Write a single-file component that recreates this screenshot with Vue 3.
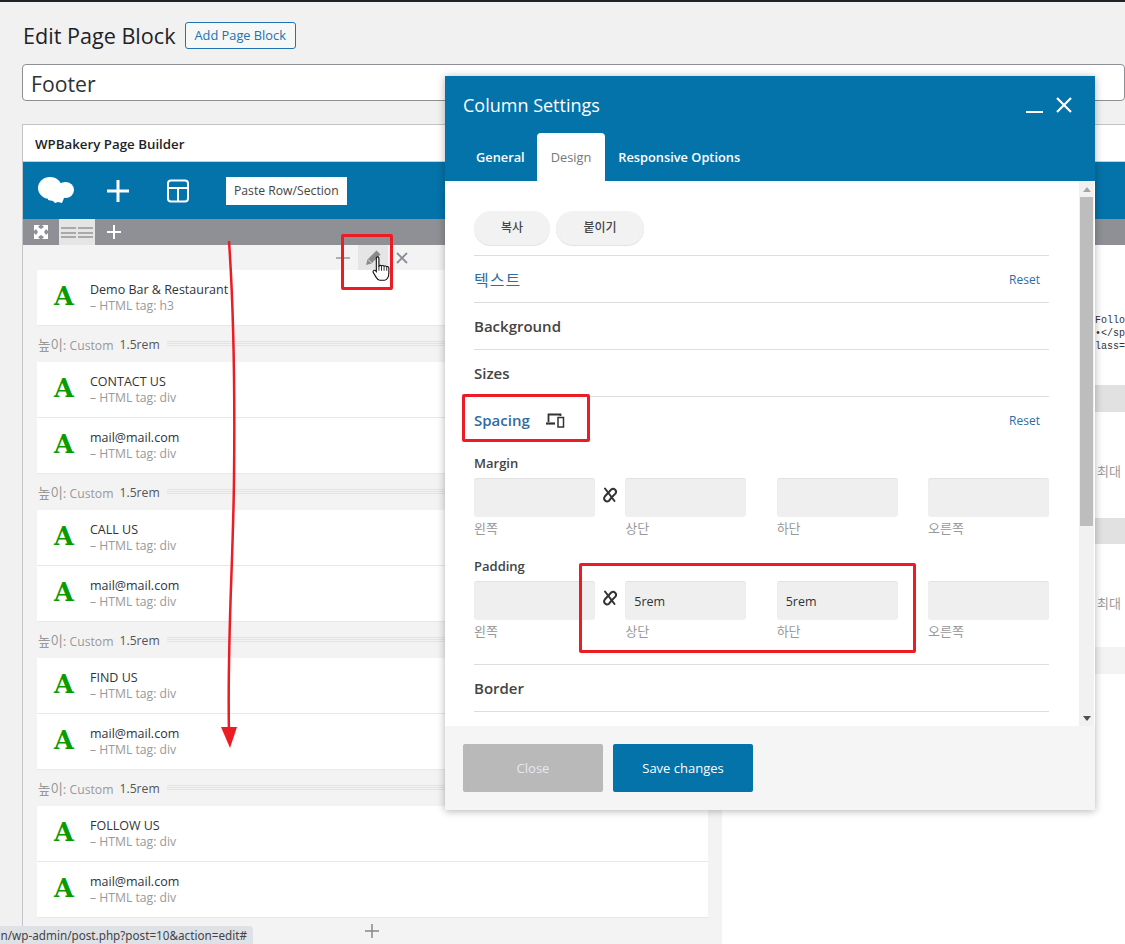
<script setup>
const rows = [
  { title: 'Demo Bar & Restaurant', tag: 'h3', sep: true },
  { title: 'CONTACT US', tag: 'div' },
  { title: 'mail@mail.com', tag: 'div', sep: true },
  { title: 'CALL US', tag: 'div' },
  { title: 'mail@mail.com', tag: 'div', sep: true },
  { title: 'FIND US', tag: 'div' },
  { title: 'mail@mail.com', tag: 'div', sep: true },
  { title: 'FOLLOW US', tag: 'div' },
  { title: 'mail@mail.com', tag: 'div' },
]

const sides = [
  { label: '왼쪽' },
  { label: '상단', padding: '5rem' },
  { label: '하단', padding: '5rem' },
  { label: '오른쪽' },
]
</script>

<template>
  <div class="page">
    <div class="heading">
      <h1 class="page-title">Edit Page Block</h1>
      <a class="add-btn">Add Page Block</a>
    </div>
    <div class="title-input">Footer</div>

    <div class="builder">
      <div class="builder-head">WPBakery Page Builder</div>
      <div class="toolbar">
        <svg class="logo" width="36" height="27" viewBox="0 0 36 27">
          <ellipse cx="12" cy="11" rx="12" ry="11" fill="#fff" />
          <ellipse cx="27.500" cy="13" rx="8.500" ry="8" fill="#fff" />
          <path d="M10 18h16v3l-2 5-4-1-3 1-2-2-5-1z" fill="#fff" />
        </svg>
        <svg class="tool-plus" width="24" height="24" viewBox="0 0 24 24">
          <path d="M12 1v22M1 12h22" stroke="#fff" stroke-width="3" />
        </svg>
        <svg class="tool-layout" width="24" height="24" viewBox="0 0 24 24" fill="none" stroke="#fff" stroke-width="2">
          <rect x="2" y="1.500" width="20" height="21" rx="3" />
          <path d="M2 9h20M12 9v13" />
        </svg>
        <span class="paste">Paste Row/Section</span>
      </div>
      <div class="subbar">
        <svg class="full" width="14" height="14" viewBox="0 0 14 14">
          <path d="M0 0h6L4 2l3 2 3-2-2-2h6v6l-2-2-2 3 2 3 2-2v6H8l2-2-3-2-3 2 2 2H0V8l2 2 2-3-2-3-2 2z" fill="#fff" />
          <path d="M7 5.500 8.500 7 7 8.500 5.500 7z" fill="#fff" />
        </svg>
        <span class="view-tab">
          <i></i><i></i>
        </span>
        <svg class="sub-plus" width="16" height="16" viewBox="0 0 16 16">
          <path d="M8 1v14M1 8h14" stroke="#fff" stroke-width="2" />
        </svg>
      </div>

      <div class="columns">
        <div class="col-left">
          <div class="col-controls">
            <svg width="16" height="16" viewBox="0 0 16 16">
              <path d="M1 8h14" stroke="#999" stroke-width="1.500" />
              <path d="M8 4v8" stroke="#999" stroke-width="1.500" opacity=".35" />
            </svg>
            <span class="pencil-box">
              <svg width="17" height="17" viewBox="0 0 17 17">
                <path d="M1 16 2.500 10.500 11.500 1.500l4 4L6.500 14.500z" fill="#8a8a8a" />
                <path d="M3 10.500 6.500 14" stroke="#e5e5e5" stroke-width="1" />
              </svg>
            </span>
            <svg width="14" height="14" viewBox="0 0 14 14">
              <path d="M2 2l10 10M12 2 2 12" stroke="#8a8f94" stroke-width="1.800" />
            </svg>
          </div>
          <div class="rows">
            <template v-for="(row, i) in rows" :key="i">
              <div class="el">
                <span class="el-icon">A</span>
                <div>
                  <div class="el-title">{{ row.title }}</div>
                  <div class="el-tag">– HTML tag: {{ row.tag }}</div>
                </div>
              </div>
              <div v-if="row.sep" class="sep">
                <span class="sep-label"><span class="sep-ko">높이:</span> Custom</span>
                <span class="sep-value">1.5rem</span>
                <span class="sep-line"></span>
              </div>
            </template>
          </div>
          <svg class="add-el" width="16" height="16" viewBox="0 0 16 16">
            <path d="M8 1v14M1 8h14" stroke="#888" stroke-width="1.500" />
          </svg>
        </div>

        <div class="col-right">
          <pre class="code">Follo
•&lt;/sp
lass=</pre>
          <div class="band first"></div>
          <div class="limit">최대</div>
          <div class="band second"></div>
          <div class="limit short">최대</div>
          <div class="band third"></div>
        </div>
      </div>
    </div>

    <div class="status"><span>n/wp-admin/post.php?post=10&amp;action=edit#</span></div>

    <!-- settings dialog -->
    <div class="modal">
      <div class="modal-head">
        <div class="modal-title">
          <span>Column Settings</span>
          <div class="modal-actions">
            <span class="minimize"></span>
            <svg width="16" height="16" viewBox="0 0 16 16">
              <path d="M1 1l14 14M15 1 1 15" stroke="#fff" stroke-width="2.200" />
            </svg>
          </div>
        </div>
        <div class="tabs">
          <span class="tab">General</span>
          <span class="tab active">Design</span>
          <span class="tab">Responsive Options</span>
        </div>
      </div>

      <div class="modal-body">
        <div class="scrollbar">
          <span class="arrow up"></span>
          <span class="thumb"></span>
          <span class="arrow down"></span>
        </div>
        <div class="form">
          <div class="copy-row">
            <span class="pill copy">복사</span>
            <span class="pill paste-pill">붙이기</span>
          </div>
          <div class="section open">
            <span class="ko-head">텍스트</span>
            <a class="reset">Reset</a>
          </div>
          <div class="section">Background</div>
          <div class="section">Sizes</div>
          <div class="section open no-line">
            <span>Spacing</span>
            <svg class="devices" width="20" height="16" viewBox="0 0 20 16" fill="none" stroke="#333">
              <path d="M3.500 10V2.500h12V4" stroke-width="1.800" />
              <path d="M1 11.500h9" stroke-width="2.200" />
              <rect x="13" y="5.500" width="5.500" height="9.500" stroke-width="1.500" />
            </svg>
            <a class="reset">Reset</a>
          </div>

          <div class="box-group margin-group">
            <div class="box-label">Margin</div>
            <div class="box-fields">
              <div v-for="side in sides" :key="side.label" class="field">
                <div class="field-input"></div>
                <div class="field-label">{{ side.label }}</div>
              </div>
              <svg class="unlink" width="16" height="16" viewBox="0 0 16 16" fill="none" stroke="#333" stroke-width="2" stroke-linecap="round">
                <path d="M3 1.500 12.500 14" />
                <path d="M6 6 2.800 9.500a3 3 0 0 0 4.200 4.200L10 10" />
                <path d="M6 6 9.200 2.500a3 3 0 0 1 4.200 4.200L10 10" />
              </svg>
            </div>
          </div>
          <div class="box-group">
            <div class="box-label">Padding</div>
            <div class="box-fields">
              <div v-for="side in sides" :key="side.label" class="field">
                <div class="field-input">{{ side.padding }}</div>
                <div class="field-label">{{ side.label }}</div>
              </div>
              <svg class="unlink" width="16" height="16" viewBox="0 0 16 16" fill="none" stroke="#333" stroke-width="2" stroke-linecap="round">
                <path d="M3 1.500 12.500 14" />
                <path d="M6 6 2.800 9.500a3 3 0 0 0 4.200 4.200L10 10" />
                <path d="M6 6 9.200 2.500a3 3 0 0 1 4.200 4.200L10 10" />
              </svg>
            </div>
          </div>
          <div class="section after-boxes">Border</div>
          <div class="section"></div>
        </div>
      </div>

      <div class="modal-foot">
        <span class="foot-btn close">Close</span>
        <span class="foot-btn save">Save changes</span>
      </div>
    </div>

    <!-- red markup on top of the screenshot -->
    <span class="mark mark-pencil"></span>
    <span class="mark mark-spacing"></span>
    <span class="mark mark-padding"></span>
    <svg class="arrow-line" width="30" height="520" viewBox="0 0 30 520" fill="none">
      <path d="M10 2C14 60 16 150 15 240S8 400 10 495" stroke="#ed1c24" stroke-width="2.500" />
      <path d="M2 488h16l-7 21z" fill="#ed1c24" />
    </svg>
    <svg class="hand" width="19" height="26" viewBox="0 0 22 30">
      <path d="M5 2.500c0-2 3-2 3 0v9c1-.8 2.300-.8 3 0 1-.8 2.300-.6 3 .3 1-.6 2.500-.3 3 .7 1-.5 2.500 0 2.500 1.500v6c0 4-2 8-5 8H9c-2 0-3-1.500-4-3L1.500 19c-1-1.500 1-3.500 2.500-2l1 1z" fill="#fff" stroke="#111" stroke-width="1.300" />
      <path d="M8 11.500V17M11 11.800V17M14 12.300V17M17 13v4" stroke="#111" stroke-width="1" />
    </svg>
  </div>
</template>

<style>
html,
body {
  margin: 0;
  overflow: hidden;
}
</style>

<style scoped>
.page {
  position: relative;
  width: 1125px;
  height: 944px;
  overflow: hidden;
  box-sizing: border-box;
  border-top: 2px solid #1d2327;
  background: #f1f1f1;
  padding-top: 20px;
  font-family: "Open Sans", "Noto Sans CJK KR", sans-serif;
  color: #444;
}

.heading {
  display: flex;
  align-items: center;
  gap: 9px;
  margin-left: 23px;
  height: 27px;
}

.page-title {
  margin: 0;
  font-size: 21.600px;
  font-weight: 400;
  color: #1d2327;
  white-space: nowrap;
}

.add-btn {
  box-sizing: border-box;
  height: 27px;
  line-height: 25px;
  padding: 0 9px;
  border: 1px solid #2271b1;
  border-radius: 3px;
  background: #f6f7f7;
  color: #2271b1;
  font-size: 12.800px;
  font-weight: 500;
}

.title-input {
  box-sizing: border-box;
  height: 37px;
  margin: 15px 0 0 22px;
  padding-left: 8px;
  border: 1px solid #8c8f94;
  border-radius: 4px;
  background: #fff;
  font-size: 21.200px;
  line-height: 37px;
  color: #2c3338;
}

.builder {
  margin: 23px 0 0 22px;
  border: 1px solid #c3c4c7;
  border-right: 0;
  background: #fff;
}

.builder-head {
  height: 37px;
  padding-left: 12px;
  line-height: 38px;
  font-size: 13.300px;
  font-weight: 600;
  color: #1d2327;
  border-bottom: 1px solid #ccd0d4;
  box-sizing: border-box;
}

.toolbar {
  display: flex;
  align-items: center;
  height: 57px;
  background: #0473aa;
}

.logo {
  margin-left: 15px;
}

.tool-plus {
  margin-left: 32px;
}

.tool-layout {
  margin-left: 36px;
}

.paste {
  margin-left: 36px;
  padding: 0 8px;
  width: 105px;
  height: 28px;
  line-height: 28px;
  background: #fff;
  font-size: 12.200px;
  white-space: nowrap;
  color: #444;
}

.subbar {
  display: flex;
  align-items: center;
  height: 26px;
  background: #8e9095;
}

.full {
  margin-left: 11px;
}

.view-tab {
  display: flex;
  justify-content: center;
  gap: 2px;
  width: 36px;
  height: 26px;
  margin-left: 11px;
  align-items: center;
  background: #e5e5e5;
}

.view-tab i {
  width: 15px;
  height: 11px;
  background: repeating-linear-gradient(#a9a9a9 0 2px, transparent 2px 4.500px);
}

.sub-plus {
  margin-left: 11px;
}

.columns {
  display: flex;
  height: 700px;
}

.col-left {
  flex: 0 0 699px;
  box-sizing: border-box;
  padding: 0 14px 0 14px;
  background: #f3f3f3;
}

.col-right {
  flex: 1;
  padding: 69px 0 0 373px;
  background: #fff;
}

.col-controls {
  display: flex;
  justify-content: flex-end;
  align-items: center;
  height: 25px;
  gap: 7px;
  padding-right: 299px;
}

.pencil-box {
  display: flex;
  align-items: center;
  justify-content: center;
  width: 30px;
  height: 25px;
  background: #e5e5e5;
}

.el {
  display: flex;
  align-items: center;
  box-sizing: border-box;
  height: 56px;
  background: #fff;
  border-bottom: 1px solid #e8e8e8;
}

.el-icon {
  width: 53px;
  padding: 0 0 2px 17px;
  box-sizing: border-box;
  font-family: "DejaVu Serif", serif;
  font-size: 25.500px;
  font-weight: 700;
  line-height: 1;
  color: #0a9b00;
}

.el-title {
  font-size: 12.500px;
  line-height: 16px;
  font-weight: 500;
  color: #333;
}

.el-tag {
  font-size: 12.200px;
  line-height: 16px;
  color: #999;
}

.sep {
  display: flex;
  align-items: center;
  height: 36px;
  padding-left: 1px;
  font-size: 12.200px;
}

.sep-label {
  color: #999;
}

.sep-ko {
  font-size: 13.500px;
}

.sep-value {
  margin-left: 6px;
  color: #555;
}

.sep-line {
  flex: 1;
  height: 6px;
  margin-left: 7px;
  background: repeating-linear-gradient(#e3e3e3 0 1px, transparent 1px 2px);
}

.add-el {
  display: block;
  margin: 5px 0 0 327px;
}

.code {
  margin: 0;
  font-family: "Liberation Mono", monospace;
  font-size: 10px;
  line-height: 13px;
  color: #333;
}

.band {
  height: 27px;
  background: #e1e1e1;
}

.band.first {
  margin-top: 32px;
}

.band.second {
  height: 26px;
}

.band.third {
  background: #f3f3f3;
}

.limit {
  height: 106px;
  padding-left: 2px;
  line-height: 118px;
  font-size: 13px;
  color: #999;
}

.limit.short {
  height: 103px;
}

.status {
  position: absolute;
  left: 0;
  bottom: 0;
  display: flex;
  justify-content: flex-end;
  box-sizing: border-box;
  width: 253px;
  height: 18px;
  overflow: hidden;
  padding-right: 6px;
  white-space: nowrap;
  border-top-right-radius: 4px;
  background: #dee1e6;
  font-family: "Noto Sans", sans-serif;
  font-size: 11.700px;
  line-height: 18px;
  color: #444;
}

.status span {
  flex: none;
}

.modal {
  position: absolute;
  left: 445px;
  top: 74px;
  display: flex;
  flex-direction: column;
  width: 650px;
  height: 734px;
  background: #fff;
  box-shadow: 0 1px 8px rgba(0, 0, 0, 0.3);
}

.modal-head {
  height: 105px;
  background: #0473aa;
  color: #fff;
}

.modal-title {
  display: flex;
  align-items: center;
  justify-content: space-between;
  height: 57px;
  padding: 0 23px 0 18px;
  font-size: 18px;
}

.modal-actions {
  display: flex;
  align-items: center;
  gap: 13px;
}

.minimize {
  width: 17px;
  height: 2px;
  margin-top: 14px;
  background: #fff;
}

.tabs {
  display: flex;
  height: 48px;
  padding-left: 18px;
}

.tab {
  padding: 0 12px 0 13px;
  line-height: 48px;
  font-size: 12.800px;
  font-weight: 600;
  white-space: nowrap;
}

.tab.active {
  padding: 0 14px;
  border-radius: 4px 4px 0 0;
  background: #fff;
  color: #777;
  font-weight: 400;
}

.modal-body {
  position: relative;
  flex: 1;
  overflow: hidden;
}

.scrollbar {
  position: absolute;
  top: 0;
  right: 1px;
  bottom: 0;
  display: flex;
  flex-direction: column;
  align-items: center;
  width: 15px;
  background: #f1f1f1;
}

.thumb {
  width: 13px;
  height: 329px;
  background: #bdbdbd;
}

.arrow {
  width: 0;
  height: 0;
  border-left: 4px solid transparent;
  border-right: 4px solid transparent;
}

.arrow.up {
  margin: 6px 0 5px;
  border-bottom: 5px solid #a6a6a6;
}

.arrow.down {
  margin-top: auto;
  margin-bottom: 5px;
  border-top: 5px solid #505050;
}

.form {
  box-sizing: border-box;
  width: 575px;
  margin-left: 29px;
  padding-top: 30px;
}

.copy-row {
  display: flex;
  gap: 6px;
  height: 44px;
}

.pill {
  box-sizing: border-box;
  height: 34px;
  border-radius: 17px;
  background: #f2f2f2;
  box-shadow: 0 1px 1px rgba(0, 0, 0, 0.12);
  text-align: center;
  font-size: 12px;
  font-weight: 500;
  line-height: 34px;
  color: #444;
}

.copy {
  width: 76px;
}

.paste-pill {
  width: 88px;
}

.section {
  display: flex;
  align-items: center;
  box-sizing: border-box;
  height: 47px;
  border-top: 1px solid #ddd;
  font-size: 15px;
  font-weight: 600;
  color: #444;
}

.section.open {
  color: #2e6da4;
}

.ko-head {
  font-size: 16px;
  font-weight: 400;
  letter-spacing: 1px;
}

.devices {
  margin-left: 15px;
}

.reset {
  margin-left: auto;
  margin-right: 9px;
  font-size: 12px;
  font-weight: 400;
  color: #2e6da4;
}

.box-group {
  height: 103px;
}

.margin-group {
  margin-top: 13px;
}

.box-label {
  height: 22px;
  line-height: 14px;
  font-size: 13px;
  font-weight: 600;
  color: #444;
}

.box-fields {
  position: relative;
  display: flex;
  justify-content: space-between;
}

.field {
  width: 121px;
}

.field-input {
  box-sizing: border-box;
  height: 39px;
  padding-left: 9px;
  border-radius: 3px;
  background: #efefef;
  box-shadow: inset 0 1px 1px rgba(0, 0, 0, 0.06);
  font-size: 12.500px;
  line-height: 41px;
  color: #333;
}

.field-label {
  margin-top: 3px;
  font-size: 13px;
  line-height: 17px;
  color: #999;
}

.unlink {
  position: absolute;
  left: 128px;
  top: 9px;
}

.after-boxes {
  margin-top: 2px;
}

.modal-foot {
  display: flex;
  gap: 10px;
  height: 84px;
  box-sizing: border-box;
  padding: 18px;
  background: #f5f5f5;
}

.foot-btn {
  width: 140px;
  height: 48px;
  border-radius: 2px;
  text-align: center;
  line-height: 48px;
  font-size: 13px;
  font-weight: 500;
}

.close {
  background: #b9b9b9;
  color: #e8e8e8;
}

.save {
  background: #0473aa;
  color: #fff;
}

.mark {
  position: absolute;
  box-sizing: border-box;
  border: 3px solid #ed1c24;
  border-radius: 2px;
}

.mark-pencil {
  left: 341px;
  top: 232px;
  width: 52px;
  height: 56px;
}

.mark-spacing {
  left: 462px;
  top: 392px;
  width: 128px;
  height: 48px;
}

.mark-padding {
  left: 579px;
  top: 561px;
  width: 337px;
  height: 90px;
}

.arrow-line {
  position: absolute;
  left: 219px;
  top: 237px;
}

.hand {
  position: absolute;
  left: 372px;
  top: 254px;
}
</style>
